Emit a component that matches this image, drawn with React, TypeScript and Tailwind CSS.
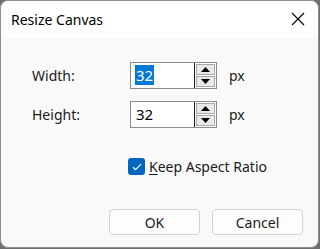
import React from "react";

const font = { fontFamily: '"Noto Sans", "Open Sans", sans-serif' };

function Arrow({ up }: { up?: boolean }) {
  return (
    <svg width="9" height="5" viewBox="0 0 9 5">
      {up ? <polygon points="0,5 9,5 4.5,0" fill="#000" /> : <polygon points="0,0 9,0 4.5,5" fill="#000" />}
    </svg>
  );
}

function NumberBox({ value, selected }: { value: string; selected?: boolean }) {
  return (
    <div className="flex h-[27px] w-[87px] border border-[#8c8c8c] bg-white">
      <div className="flex-1 pl-[4px] pt-0">
        <span
          className={
            selected
              ? "inline-block h-[20px] bg-[#0078d7] px-px text-[15px] leading-[20px] text-white"
              : "inline-block h-[20px] px-px text-[15px] leading-[20px] text-black"
          }
        >
          {value}
        </span>
      </div>
      <div className="flex">
        <div className="w-px bg-[#1e1e1e]" />
        <div className="flex flex-col gap-px py-px pl-px pr-[1px]">
          <div className="flex h-[12px] w-[19px] items-center justify-center border border-[#a8a8a8] bg-[#e9e9e9]">
            <Arrow up />
          </div>
          <div className="flex h-[12px] w-[19px] items-center justify-center border border-[#a8a8a8] bg-[#e9e9e9]">
            <Arrow />
          </div>
        </div>
      </div>
    </div>
  );
}

export default function App() {
  return (
    <div className="h-[249px] w-[320px] bg-[#6f6f6f]" style={font}>
      <div className="flex h-[248px] w-[319px] flex-col overflow-hidden rounded-[8px] border border-[#8f8f8f] bg-[#f9f9f9]">
        <div className="flex h-[36px] items-center justify-between bg-white pl-[10px] pr-[13px]">
          <span className="text-[14px] text-black">Resize Canvas</span>
          <svg width="14" height="14" viewBox="0 0 14 14">
            <path d="M1 1L13 13M13 1L1 13" stroke="#000" strokeWidth="1.1" />
          </svg>
        </div>

        <div className="flex flex-1 flex-col pl-[31px] pt-[25px]">
          <div className="flex items-center">
            <span className="w-[98px] text-[14px] text-[#1a1a1a]">Width:</span>
            <NumberBox value="32" selected />
            <span className="ml-[12px] text-[14px] text-[#1a1a1a]">px</span>
          </div>
          <div className="mt-[12px] flex items-center">
            <span className="w-[98px] text-[14px] text-[#1a1a1a]">Height:</span>
            <NumberBox value="32" />
            <span className="ml-[12px] text-[14px] text-[#1a1a1a]">px</span>
          </div>

          <div className="ml-[96px] mt-[28px] flex items-center gap-[4px]">
            <div className="flex h-[17px] w-[17px] items-center justify-center rounded-[3px] bg-[#0067c0]">
              <svg width="10" height="8" viewBox="0 0 10 8">
                <path d="M1 4.2L3.6 6.6L9 1.2" stroke="#fff" strokeWidth="1.2" fill="none" />
              </svg>
            </div>
            <span className="text-[14px] text-[#1a1a1a]">
              <span className="underline underline-offset-2">K</span>eep Aspect Ratio
            </span>
          </div>

          <div className="ml-[77px] mt-[32px] flex gap-[12px]">
            <button className="h-[26px] w-[91px] rounded-[4px] border border-[#d3d3d3] bg-[#fdfdfd] text-[14px] text-[#1a1a1a]">
              OK
            </button>
            <button className="h-[26px] w-[91px] rounded-[4px] border border-[#d3d3d3] bg-[#fdfdfd] text-[14px] text-[#1a1a1a]">
              Cancel
            </button>
          </div>
        </div>
      </div>
    </div>
  );
}
